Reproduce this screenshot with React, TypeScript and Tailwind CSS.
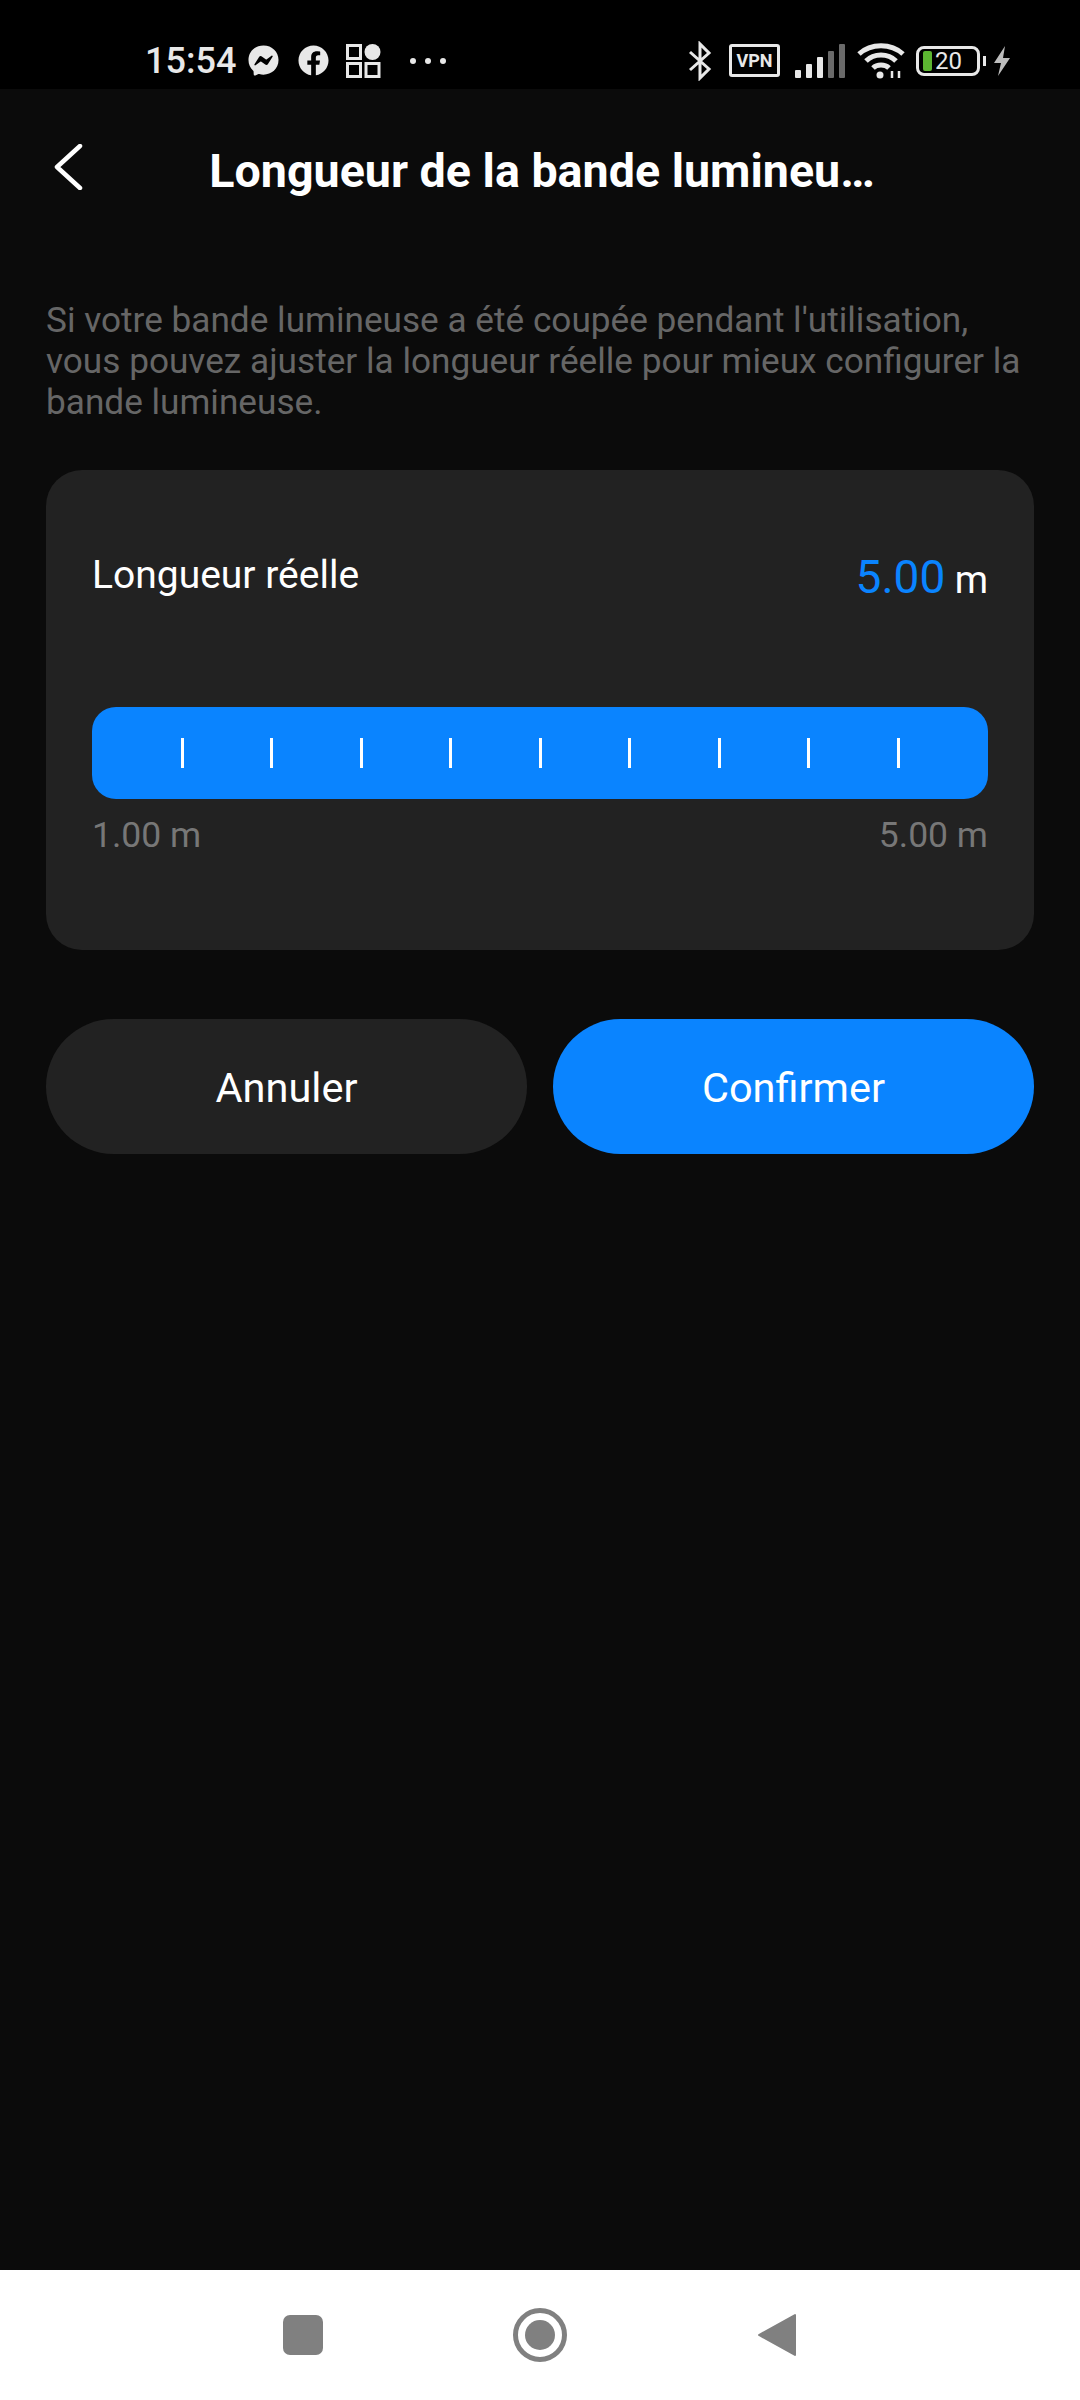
import { FaFacebook, FaFacebookMessenger } from "react-icons/fa";

function StatusBar() {
  return (
    <div className="h-[89px] bg-black flex items-center justify-between pl-[145px] pr-[68px] pt-[32px] text-[#e8e8e8]">
      <div className="flex items-center">
        <span className="text-[36px] font-medium w-[101px] leading-none">15:54</span>
        <FaFacebookMessenger className="w-[31px] h-[31px] ml-[2px]" />
        <FaFacebook className="w-[31px] h-[31px] ml-[19px]" />
        <svg viewBox="0 0 36 36" className="w-[36px] h-[36px] ml-[17px]">
          <rect x="1.5" y="2.5" width="13" height="13" fill="none" stroke="currentColor" strokeWidth="3" />
          <circle cx="26.5" cy="9" r="8" fill="currentColor" />
          <rect x="1.5" y="20.5" width="13" height="13" fill="none" stroke="currentColor" strokeWidth="3" />
          <rect x="20" y="20.5" width="13" height="13" fill="none" stroke="currentColor" strokeWidth="3" />
        </svg>
        <div className="flex gap-[9px] ml-[28px]">
          <span className="w-[6px] h-[6px] rounded-full bg-[#e8e8e8]" />
          <span className="w-[6px] h-[6px] rounded-full bg-[#e8e8e8]" />
          <span className="w-[6px] h-[6px] rounded-full bg-[#e8e8e8]" />
        </div>
      </div>
      <div className="flex items-center">
        <svg viewBox="0 0 24 40" className="w-[24px] h-[40px]">
          <path d="M2 11 L21 28 L12 37 V3 L21 12 L2 29" fill="none" stroke="currentColor" strokeWidth="3" />
        </svg>
        <div className="w-[51px] h-[33px] ml-[17px] border-[3px] border-[#e8e8e8] rounded-[3px] flex items-center justify-center text-[18px] font-bold leading-none">
          VPN
        </div>
        <svg viewBox="0 0 50 34" className="w-[50px] h-[34px] ml-[15px]">
          <rect x="0" y="26" width="6" height="8" rx="1" fill="#e8e8e8" />
          <rect x="11" y="20" width="6" height="14" rx="1" fill="#e8e8e8" />
          <rect x="22" y="13" width="6" height="21" rx="1" fill="#e8e8e8" />
          <rect x="33" y="7" width="6" height="27" rx="1" fill="#6a6a6a" />
          <rect x="44" y="0" width="6" height="34" rx="1" fill="#6a6a6a" />
        </svg>
        <svg viewBox="0 0 48 36" className="w-[48px] h-[36px] ml-[12px]">
          <path d="M2 11 C14 0 34 0 46 11" fill="none" stroke="currentColor" strokeWidth="5" />
          <path d="M9 18 C17 10 31 10 39 18" fill="none" stroke="currentColor" strokeWidth="5" />
          <path d="M16 25 C20 21 28 21 32 25" fill="none" stroke="currentColor" strokeWidth="5" />
          <circle cx="23" cy="32" r="3.5" fill="currentColor" />
          <path d="M35 28 V35 M42 28 V35" stroke="currentColor" strokeWidth="2.5" />
        </svg>
        <div className="flex items-center ml-[11px]">
          <div className="w-[64px] h-[30px] border-[3px] border-[#e8e8e8] rounded-[8px] flex items-center pl-[4px] gap-[3px]">
            <span className="w-[9px] h-[20px] bg-[#5cb531] rounded-[2px]" />
            <span className="text-[24px] leading-none">20</span>
          </div>
          <span className="w-[3px] h-[10px] bg-[#e8e8e8] ml-[3px]" />
        </div>
        <svg viewBox="0 0 20 32" className="w-[20px] h-[32px] ml-[6px]">
          <path d="M13 1 L2 18 H9 L6 31 L18 13 H11 Z" fill="#bdbdbd" />
        </svg>
      </div>
    </div>
  );
}

function Slider() {
  const ticks = [1, 2, 3, 4, 5, 6, 7, 8, 9];
  return (
    <div className="h-[92px] px-[2px] bg-[#0a84ff] rounded-[24px] flex items-center justify-evenly">
      {ticks.map((t) => (
        <span key={t} className="w-[3px] h-[30px] bg-white" />
      ))}
    </div>
  );
}

export default function App() {
  return (
    <div className="w-[1080px] h-[2400px] bg-[#0b0b0b] flex flex-col font-['Roboto',sans-serif]">
      <StatusBar />

      {/* Header */}
      <div className="h-[167px] pb-[2px] pl-[4px] relative flex items-center justify-center">
        <svg viewBox="0 0 30 46" className="w-[30px] h-[46px] absolute left-[53px] top-[55px]">
          <path d="M27 2 L4 23 L27 44" fill="none" stroke="#fff" strokeWidth="4.5" strokeLinecap="round" strokeLinejoin="round" />
        </svg>
        <h1 className="text-[46.6px] font-bold text-white leading-none">Longueur de la bande lumineu…</h1>
      </div>

      <div className="flex-1 px-[46px] pt-[44px]">
        <p className="text-[35.2px] leading-[41px] text-[#666]">
          Si votre bande lumineuse a été coupée pendant l'utilisation,
          <br />
          vous pouvez ajuster la longueur réelle pour mieux configurer la
          <br />
          bande lumineuse.
        </p>

        {/* Length card */}
        <div className="mt-[47px] h-[480px] bg-[#222] rounded-[36px] px-[46px] pt-[78px]">
          <div className="flex items-center justify-between h-[52px]">
            <span className="text-[39px] text-white pt-[3px]">Longueur réelle</span>
            <span className="text-[38px] text-white pt-[7px]">
              <span className="text-[46px] text-[#0a84ff]">5.00</span> m
            </span>
          </div>
          <div className="mt-[107px]">
            <Slider />
          </div>
          <div className="flex justify-between mt-[16px] text-[35.5px] leading-[40px] text-[#777]">
            <span>1.00 m</span>
            <span>5.00 m</span>
          </div>
        </div>

        {/* Buttons */}
        <div className="grid grid-cols-2 gap-[26px] mt-[69px]">
          <button className="h-[135px] pt-[4px] rounded-full bg-[#222] text-white text-[41.5px]">Annuler</button>
          <button className="h-[135px] pt-[4px] rounded-full bg-[#0a84ff] text-white text-[41.5px]">Confirmer</button>
        </div>
      </div>

      {/* Nav bar */}
      <div className="h-[130px] bg-white flex items-center justify-center">
        <div className="w-[40px] h-[40px] rounded-[7px] bg-[#808080]" />
        <div className="w-[54px] h-[54px] ml-[190px] rounded-full border-[5px] border-[#808080] flex items-center justify-center">
          <div className="w-[30px] h-[30px] rounded-full bg-[#808080]" />
        </div>
        <svg viewBox="0 0 40 46" className="w-[40px] h-[46px] ml-[190px]">
          <path d="M38 3 V43 L2 23 Z" fill="#808080" stroke="#808080" strokeWidth="2" strokeLinejoin="round" />
        </svg>
      </div>
    </div>
  );
}
